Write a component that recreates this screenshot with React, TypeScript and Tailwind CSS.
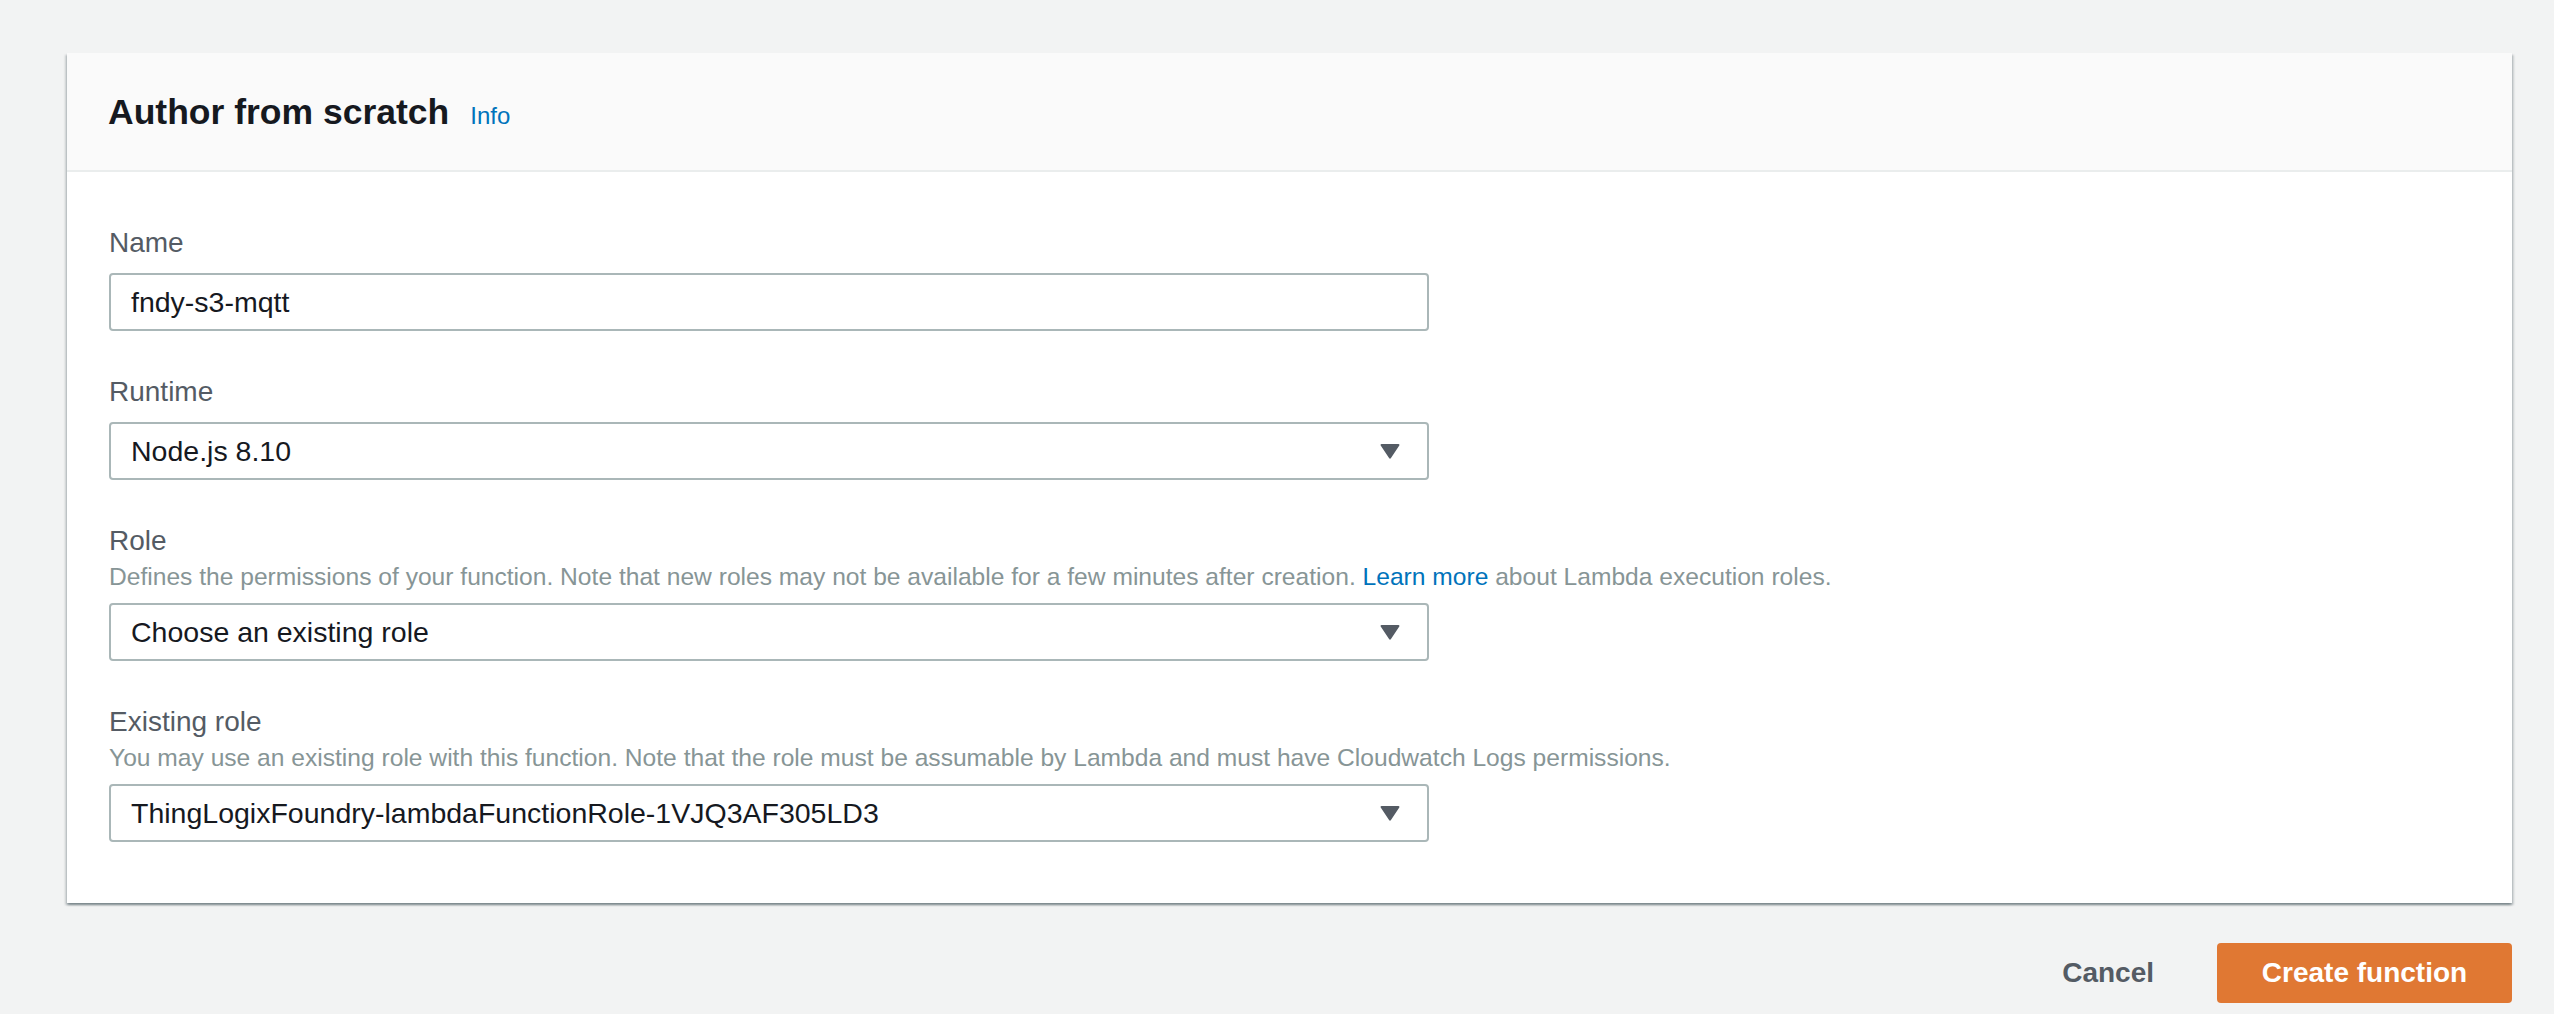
import React from 'react';

const font = { fontFamily: '"Liberation Sans", Arial, sans-serif' };

const Caret = () => (
  <svg width="20" height="16" viewBox="0 0 20 16" className="shrink-0">
    <path d="M1.5 1h17c.8 0 1.2.8.8 1.4L10.8 15.2c-.4.6-1.2.6-1.6 0L.7 2.4C.3 1.8.7 1 1.5 1z" fill="#545b64" />
  </svg>
);

type FieldProps = {
  label: string;
  description?: React.ReactNode;
  value: string;
  select?: boolean;
};

const Field = ({ label, description, value, select }: FieldProps) => (
  <div className="flex flex-col">
    <label className="text-[28px] leading-[40px] text-[#545b64]">{label}</label>
    {description && <p className="text-[24.6px] leading-[32px] text-[#879596]">{description}</p>}
    <div className="mt-[10px] w-[1320px] h-[58px] border-2 border-[#aab7b8] rounded-[4px] bg-white flex items-center justify-between pl-[20px] pr-[27px]">
      <span className="text-[28.5px] text-[#16191f]">{value}</span>
      {select && <Caret />}
    </div>
  </div>
);

export default function App() {
  return (
    <div className="min-h-screen bg-[#f2f3f3] pt-[53px] pl-[67px] pr-[42px] pb-[12px]" style={font}>
      <div className="bg-white shadow-[0_2px_2px_0_rgba(0,28,36,0.3),2px_2px_2px_0_rgba(0,28,36,0.15),-2px_2px_2px_0_rgba(0,28,36,0.15)]">
        <div className="h-[119px] bg-[#fafafa] border-b-2 border-[#eaeded] px-[41px] flex items-center pt-[3px]">
          <div className="flex items-baseline gap-[21px]">
            <h2 className="text-[35.5px] font-bold text-[#16191f]">Author from scratch</h2>
            <a className="text-[24px] text-[#0073bb]">Info</a>
          </div>
        </div>
        <div className="px-[42px] pt-[51px] pb-[61px] flex flex-col gap-[41px]">
          <Field label="Name" value="fndy-s3-mqtt" />
          <Field label="Runtime" value="Node.js 8.10" select />
          <Field
            label="Role"
            description={
              <>
                Defines the permissions of your function. Note that new roles may not be available for a few minutes after creation.{' '}
                <a className="text-[#0073bb]">Learn more</a> about Lambda execution roles.
              </>
            }
            value="Choose an existing role"
            select
          />
          <Field
            label="Existing role"
            description="You may use an existing role with this function. Note that the role must be assumable by Lambda and must have Cloudwatch Logs permissions."
            value="ThingLogixFoundry-lambdaFunctionRole-1VJQ3AF305LD3"
            select
          />
        </div>
      </div>
      <div className="mt-[40px] flex justify-end items-center gap-[63px]">
        <button className="text-[28px] font-bold text-[#545b64]">Cancel</button>
        <button className="w-[295px] h-[60px] rounded-[4px] bg-[#e07833] text-white text-[28px] font-bold">Create function</button>
      </div>
    </div>
  );
}
